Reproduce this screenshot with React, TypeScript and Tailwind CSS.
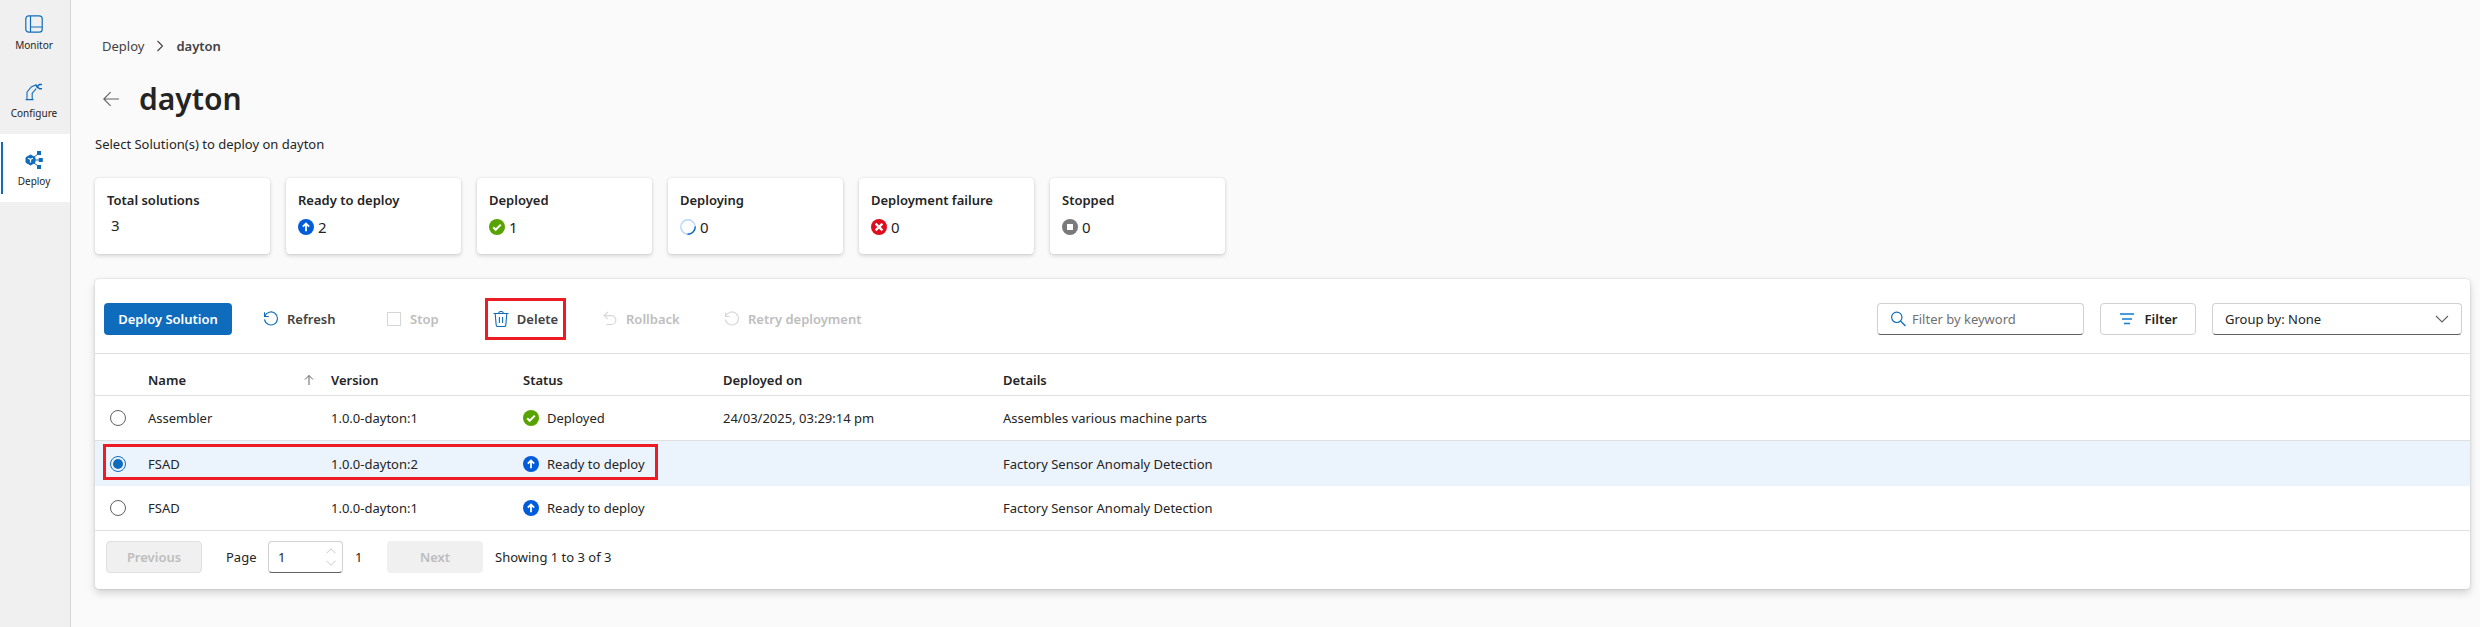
import { useState } from "react";
import type { ReactNode } from "react";

function StatusIcon({ kind }: { kind: string }) {
  if (kind === "deploying") {
    return (
      <svg className="size-4" viewBox="0 0 16 16" fill="none" strokeWidth="1.4" aria-hidden="true">
        <circle cx="8" cy="8" r="7.2" stroke="#b4d6fa" />
        <path d="M15.2 8A7.2 7.2 0 0 1 8 15.2" stroke="#0f6cbd" strokeLinecap="round" />
      </svg>
    );
  }
  const fills: Record<string, string> = {
    ready: "#015cda",
    deployed: "#57a300",
    failure: "#e00b1c",
    stopped: "#7a7a7a",
  };
  return (
    <svg className="size-4 shrink-0" viewBox="0 0 16 16" fill="none" stroke="#fff" strokeWidth="2" aria-hidden="true">
      <circle cx="8" cy="8" r="8" fill={fills[kind]} stroke="none" />
      {kind === "ready" && <path d="M8 12.2V5M4.8 7.7 8 4.5l3.2 3.2" strokeWidth="1.8" />}
      {kind === "deployed" && <path d="m4.2 8.3 2.5 2.5 5.1-5.2" />}
      {kind === "failure" && <path d="m4.6 4.6 6.8 6.8M11.4 4.6l-6.8 6.8" strokeWidth="2.2" />}
      {kind === "stopped" && <rect x="5" y="5" width="6" height="6" fill="#fff" stroke="none" />}
    </svg>
  );
}

function RetryIcon() {
  return (
    <svg className="size-4" viewBox="0 0 16 16" fill="none" stroke="currentColor" strokeWidth="1.1" aria-hidden="true">
      <path d="M1.5 1.2v4.3h4.3M1.8 5.3A6.5 6.5 0 1 1 1.5 8.4" />
    </svg>
  );
}

function StopIcon() {
  return (
    <svg className="size-4" viewBox="0 0 16 16" fill="none" stroke="currentColor" aria-hidden="true">
      <rect x="1.5" y="1.5" width="13" height="13" />
    </svg>
  );
}

function TrashIcon() {
  return (
    <svg className="size-4" viewBox="0 0 16 16" fill="none" stroke="currentColor" strokeWidth="1.1" aria-hidden="true">
      <path d="M.5 2.5h15M5.7 2.3C5.7 1 6.6.5 8 .5s2.3.5 2.3 1.8M2.2 2.7l1 11.4q.2 1.4 1.6 1.4h6.4q1.4 0 1.6-1.4l1-11.4M6.4 6v6M9.6 6v6" />
    </svg>
  );
}

function UndoIcon() {
  return (
    <svg className="size-4" viewBox="0 0 16 16" fill="none" stroke="currentColor" strokeWidth="1.1" aria-hidden="true">
      <path d="M5.8 1 2.2 4.6l3.6 3.6M2.4 4.6h7a4.4 4.4 0 0 1 0 8.9H4.2" />
    </svg>
  );
}

function Chevron({ className, d }: { className: string; d: string }) {
  return (
    <svg className={className} viewBox="0 0 16 16" fill="none" stroke="currentColor" strokeWidth="1.1" aria-hidden="true">
      <path d={d} />
    </svg>
  );
}

function NavItem({ label, active, children }: { label: string; active?: boolean; children: ReactNode }) {
  return (
    <a
      href="#"
      aria-current={active ? "page" : undefined}
      className={`relative flex h-[68px] flex-col items-center justify-center gap-1 pt-[3px] pr-0.5 text-[10px] leading-4 text-[#242424] ${active ? "bg-white" : ""}`}
    >
      {active && <span className="absolute inset-y-2 left-px w-0.5 bg-[#0f6cbd]" />}
      {children}
      <span>{label}</span>
    </a>
  );
}

function ToolButton({ label, icon, disabled }: { label: string; icon: ReactNode; disabled?: boolean }) {
  return (
    <button
      type="button"
      disabled={disabled}
      className={`flex h-8 items-center gap-2 font-semibold ${disabled ? "text-[#bdbdbd]" : "text-[#424242]"}`}
    >
      <span className={disabled ? "text-[#d6d6d6]" : "text-[#0f6cbd]"}>{icon}</span>
      {label}
    </button>
  );
}

const stats = [
  { label: "Total solutions", value: 3, kind: "" },
  { label: "Ready to deploy", value: 2, kind: "ready" },
  { label: "Deployed", value: 1, kind: "deployed" },
  { label: "Deploying", value: 0, kind: "deploying" },
  { label: "Deployment failure", value: 0, kind: "failure" },
  { label: "Stopped", value: 0, kind: "stopped" },
];

const rows = [
  { name: "Assembler", version: "1.0.0-dayton:1", status: "Deployed", kind: "deployed", date: "24/03/2025, 03:29:14 pm", details: "Assembles various machine parts" },
  { name: "FSAD", version: "1.0.0-dayton:2", status: "Ready to deploy", kind: "ready", date: "", details: "Factory Sensor Anomaly Detection" },
  { name: "FSAD", version: "1.0.0-dayton:1", status: "Ready to deploy", kind: "ready", date: "", details: "Factory Sensor Anomaly Detection" },
];

export default function App() {
  const [selected, setSelected] = useState(1);
  return (
    <div className="flex min-h-screen bg-[#fafafa] font-['Noto_Sans','Open_Sans',sans-serif] text-[13px] leading-5 text-[#242424]">
      <nav className="w-[71px] shrink-0 overflow-hidden border-r border-[#d6d6d6] bg-[#f0f0f0]" aria-label="Main">
        <div className="-mt-0.5">
          <NavItem label="Monitor">
            <svg className="size-[18px]" viewBox="0 0 18 18" fill="none" stroke="#0f6cbd" strokeWidth="1.2" aria-hidden="true">
              <rect x=".8" y=".8" width="16.4" height="16.4" rx="3" />
              <path d="M5.5 1v16M5.5 12h11.5" />
            </svg>
          </NavItem>
          <NavItem label="Configure">
            <svg className="size-[18px]" viewBox="0 0 18 18" fill="none" stroke="#0f6cbd" strokeWidth="1.1" aria-hidden="true">
              <path d="M.6 16.6h8M2 16.4V9.2L6.2 4l5-2.2M7.2 16.4V10.2l4-4.6" />
              <path d="M10.6 1.6 13 5.2M17 1.4h-2.6l-3 3M17 5.8h-2.4l-3-2.6" strokeWidth="1.5" />
            </svg>
          </NavItem>
          <NavItem label="Deploy" active>
            <svg className="size-[18px]" viewBox="0 0 18 18" fill="#0f6cbd" aria-hidden="true">
              <path d="M5.5 4 10 6.5v5L5.5 14 1 11.5v-5z" stroke="#0f6cbd" strokeLinejoin="round" />
              <path d="M3 7.2 5.5 8.4 8 7.2M5.5 8.4v3.2" stroke="#fff" strokeWidth="1.2" fill="none" />
              <path d="m9 6 4-3M10 9h5M9 12l4 3" stroke="#0f6cbd" fill="none" />
              <path d="M12 0h4v4h-4zM13.8 7h4v4h-4zM12 14h4v4h-4z" />
            </svg>
          </NavItem>
        </div>
      </nav>

      <main className="min-w-0 flex-1 pt-9 pr-[10px] pb-6 pl-6">
        <nav aria-label="Breadcrumb" className="flex items-center gap-2 pl-[7px] text-[#424242]">
          <a href="#">Deploy</a>
          <Chevron className="size-4" d="m5.5 3 5 5-5 5" />
          <span className="font-semibold">dayton</span>
        </nav>

        <div className="mt-[23px] flex h-10 items-center gap-5 pl-2">
          <button type="button" aria-label="Back">
            <svg className="size-4" viewBox="0 0 16 16" fill="none" stroke="#616161" strokeWidth="1.1" aria-hidden="true">
              <path d="M16 8H.8M7.6 1.2.8 8l6.8 6.8" />
            </svg>
          </button>
          <h1 className="text-[30px] leading-10 font-semibold">dayton</h1>
        </div>

        <p className="mt-[15px]">Select Solution(s) to deploy on dayton</p>

        <div className="mt-6 flex flex-wrap gap-4">
          {stats.map((s) => (
            <section key={s.label} className="h-[76px] w-[175px] rounded bg-white px-3 py-3 shadow-[0_0_2px_rgba(0,0,0,0.12),0_2px_4px_rgba(0,0,0,0.14)]">
              <h2 className="font-semibold">{s.label}</h2>
              {s.kind ? (
                <div className="mt-[7px] flex items-center gap-1 text-[15px]">
                  <StatusIcon kind={s.kind} />
                  {s.value}
                </div>
              ) : (
                <div className="mt-[5px] pl-1 text-[15px]">{s.value}</div>
              )}
            </section>
          ))}
        </div>

        <section className="mt-[25px] rounded bg-white pb-4 shadow-[0_0_2px_rgba(0,0,0,0.2),0_4px_8px_rgba(0,0,0,0.16)]">
          <div className="flex h-[75px] items-center justify-between border-b border-[#e0e0e0] pt-1.5 pr-2 pl-[9px]">
            <div className="flex items-center">
              <button type="button" className="mr-[31px] h-8 w-32 rounded bg-[#0f6cbd] font-semibold text-white">
                Deploy Solution
              </button>
              <div className="w-[123px]"><ToolButton label="Refresh" icon={<RetryIcon />} /></div>
              <div className="w-[99px]"><ToolButton label="Stop" icon={<StopIcon />} disabled /></div>
              <div className="mr-9 flex h-[42px] w-[81px] items-center justify-center border-[3px] border-[#ed1c24]">
                <ToolButton label="Delete" icon={<TrashIcon />} />
              </div>
              <div className="w-[122px]"><ToolButton label="Rollback" icon={<UndoIcon />} disabled /></div>
              <ToolButton label="Retry deployment" icon={<RetryIcon />} disabled />
            </div>

            <div className="flex items-center gap-4">
              <label className="flex h-8 w-[207px] items-center gap-1.5 rounded border border-[#d1d1d1] border-b-[#616161] px-3">
                <svg className="size-4 shrink-0" viewBox="0 0 16 16" fill="none" stroke="#0f6cbd" strokeWidth="1.2" aria-hidden="true">
                  <circle cx="6.8" cy="6.3" r="5.2" />
                  <path d="m10.5 10 5 5" />
                </svg>
                <input type="text" aria-label="Filter by keyword" placeholder="Filter by keyword" className="w-full min-w-0 outline-none placeholder:text-[#707070]" />
              </label>
              <button type="button" className="flex h-8 w-24 items-center justify-center gap-2.5 rounded border border-[#d1d1d1] font-semibold">
                <svg className="size-4" viewBox="0 0 16 16" fill="none" stroke="#0f7ad8" strokeWidth="1.6" aria-hidden="true">
                  <path d="M1 3h14M3 8h10M5 12.5h6" />
                </svg>
                Filter
              </button>
              <div className="relative flex items-center">
                <select aria-label="Group by" className="h-8 w-[250px] appearance-none rounded border border-[#d1d1d1] border-b-[#616161] bg-white px-3">
                  <option>Group by: None</option>
                </select>
                <Chevron className="pointer-events-none absolute right-3 size-4 text-[#616161]" d="m2 5 6 6 6-6" />
              </div>
            </div>
          </div>

          <table className="w-full table-fixed border-separate border-spacing-0 text-left">
            <colgroup>
              <col className="w-[53px]" />
              <col className="w-[183px]" />
              <col className="w-[192px]" />
              <col className="w-[200px]" />
              <col className="w-[280px]" />
              <col />
            </colgroup>
            <thead>
              <tr className="h-[42px] align-bottom *:border-b *:border-[#e0e0e0] *:pb-[5px] *:font-semibold">
                <th aria-label="Select" />
                <th>
                  <span className="flex items-center justify-between pr-4">
                    Name
                    <svg className="size-3" viewBox="0 0 12 12" fill="none" stroke="#616161" aria-hidden="true">
                      <path d="M6 11V1.5M2 5.5l4-4 4 4" />
                    </svg>
                  </span>
                </th>
                <th>Version</th>
                <th>Status</th>
                <th>Deployed on</th>
                <th>Details</th>
              </tr>
            </thead>
            <tbody>
              {rows.map((r, i) => (
                <tr key={i} className={`h-[45px] ${i === 1 ? "bg-[#ebf3fc]" : "*:border-b *:border-[#e0e0e0]"}`}>
                  <td className="relative pl-[15px]">
                    {i === 1 && <span className="pointer-events-none absolute top-[3px] left-2 h-9 w-[555px] border-[3px] border-[#ed1c24]" />}
                    <input
                      type="radio"
                      name="solution"
                      aria-label={`Select ${r.name} ${r.version}`}
                      checked={selected === i}
                      onChange={() => setSelected(i)}
                      className="block size-4 appearance-none rounded-full border border-[#616161] bg-white checked:border-[#0f6cbd] checked:bg-[#0f6cbd] checked:bg-clip-content checked:p-0.5"
                    />
                  </td>
                  <td>{r.name}</td>
                  <td>{r.version}</td>
                  <td>
                    <span className="flex items-center gap-2">
                      <StatusIcon kind={r.kind} />
                      {r.status}
                    </span>
                  </td>
                  <td>{r.date}</td>
                  <td>{r.details}</td>
                </tr>
              ))}
            </tbody>
          </table>

          <div className="flex items-center px-[11px] pt-[10px]">
            <button type="button" disabled className="h-8 w-24 rounded border border-[#e0e0e0] bg-[#f0f0f0] font-semibold text-[#bdbdbd]">
              Previous
            </button>
            <label htmlFor="page" className="w-[66px] pl-6">Page</label>
            <div className="relative">
              <input id="page" type="text" defaultValue="1" className="block h-8 w-[75px] rounded border border-[#d1d1d1] border-b-[#616161] px-[9px]" />
              <span className="absolute inset-y-1 right-1.5 flex flex-col justify-between text-[#bdbdbd]">
                <button type="button" aria-label="Next page" className="block"><Chevron className="size-3" d="m2 11 6-6 6 6" /></button>
                <button type="button" aria-label="Previous page" className="block"><Chevron className="size-3" d="m2 5 6 6 6-6" /></button>
              </span>
            </div>
            <span className="w-11 pl-3">1</span>
            <button type="button" disabled className="mr-3 h-8 w-24 rounded bg-[#f0f0f0] font-semibold text-[#bdbdbd]">
              Next
            </button>
            <span>Showing 1 to 3 of 3</span>
          </div>
        </section>
      </main>
    </div>
  );
}
